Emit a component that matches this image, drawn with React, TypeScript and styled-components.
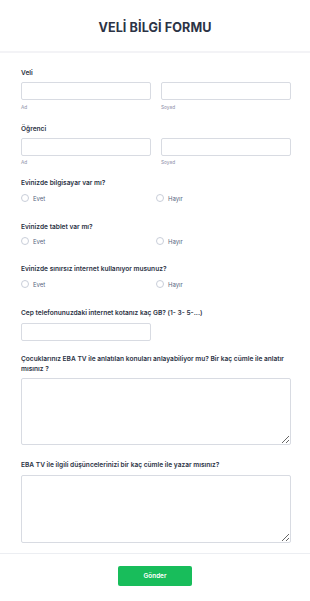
import React from "react";
import styled, { createGlobalStyle } from "styled-components";

const Global = createGlobalStyle`
  html, body { margin: 0; padding: 0; background: #fff; }
  body { font-family: Inter, "Noto Sans", sans-serif; color: #2c3345; }
  * { box-sizing: border-box; }
`;

const Page = styled.div`
  width: 310px;
  background: #fff;
`;

const Header = styled.header`
  height: 53px;
  display: flex;
  align-items: center;
  justify-content: center;
  border-bottom: 2px solid #f3f3f6;
  padding-top: 4px;
`;

const Title = styled.h1`
  margin: 0;
  font-size: 12.6px;
  line-height: 16px;
  font-weight: 700;
  letter-spacing: 0.1px;
  color: #2c3345;
`;

const Form = styled.form`
  display: flex;
  flex-direction: column;
  padding: 0 19px 0 21px;
`;

const Field = styled.div<{ $top: number }>`
  display: flex;
  flex-direction: column;
  padding-top: ${(p) => p.$top}px;
`;

const Label = styled.label<{ $mb?: number }>`
  font-size: 6.6px;
  line-height: 10px;
  font-weight: 600;
  color: #2c3345;
  margin-bottom: ${(p) => p.$mb ?? 4}px;
`;

const Pair = styled.div`
  display: grid;
  grid-template-columns: 1fr 1fr;
  column-gap: 10px;
`;

const Col = styled.div`
  display: flex;
  flex-direction: column;
`;

const Input = styled.input<{ $w?: number }>`
  height: 18px;
  width: ${(p) => (p.$w ? `${p.$w}px` : "100%")};
  border: 1px solid #d8dbe2;
  border-radius: 2px;
  background: #fff;
  outline: none;
  padding: 0 4px;
`;

const Sub = styled.span`
  font-size: 4.8px;
  line-height: 7px;
  color: #8d8fa8;
  margin-top: 3.5px;
`;

const Radios = styled.div`
  display: grid;
  grid-template-columns: 1fr 1fr;
`;

const RadioItem = styled.div`
  display: flex;
  align-items: center;
  gap: 4px;
  height: 8px;
`;

const Circle = styled.span`
  width: 8px;
  height: 8px;
  border-radius: 50%;
  border: 1px solid #c9ced9;
  background: #fff;
`;

const RadioText = styled.span`
  font-size: 6px;
  color: #57647e;
`;

const Area = styled.textarea<{ $h: number }>`
  width: 100%;
  height: ${(p) => p.$h}px;
  border: 1px solid #d8dbe2;
  border-radius: 2px;
  background: #fff;
  outline: none;
  resize: vertical;
  font-family: inherit;
`;

const Footer = styled.div`
  margin-top: 10px;
  border-top: 1px solid #eceef2;
  display: flex;
  justify-content: center;
  padding: 12px 0 17px;
`;

const Button = styled.button`
  width: 74px;
  height: 20px;
  border: none;
  border-radius: 2px;
  background: #18bd5b;
  color: #fff;
  font-family: Inter, sans-serif;
  font-size: 6.4px;
  font-weight: 600;
`;

const YesNo = () => (
  <Radios>
    <RadioItem>
      <Circle />
      <RadioText>Evet</RadioText>
    </RadioItem>
    <RadioItem>
      <Circle />
      <RadioText>Hayır</RadioText>
    </RadioItem>
  </Radios>
);

export default function App() {
  return (
    <Page>
      <Global />
      <Header>
        <Title>VELİ BİLGİ FORMU</Title>
      </Header>
      <Form>
        <Field $top={15}>
          <Label>Veli</Label>
          <Pair>
            <Col>
              <Input />
              <Sub>Ad</Sub>
            </Col>
            <Col>
              <Input />
              <Sub>Soyad</Sub>
            </Col>
          </Pair>
        </Field>
        <Field $top={13}>
          <Label>Öğrenci</Label>
          <Pair>
            <Col>
              <Input />
              <Sub>Ad</Sub>
            </Col>
            <Col>
              <Input />
              <Sub>Soyad</Sub>
            </Col>
          </Pair>
        </Field>
        <Field $top={12}>
          <Label $mb={6}>Evinizde bilgisayar var mı?</Label>
          <YesNo />
        </Field>
        <Field $top={20}>
          <Label $mb={5}>Evinizde tablet var mı?</Label>
          <YesNo />
        </Field>
        <Field $top={19}>
          <Label $mb={6}>Evinizde sınırsız internet kullanıyor musunuz?</Label>
          <YesNo />
        </Field>
        <Field $top={20}>
          <Label $mb={5}>Cep telefonunuzdaki internet kotanız kaç GB? (1- 3- 5-...)</Label>
          <Input $w={130} />
        </Field>
        <Field $top={13}>
          <Label $mb={4}>
            Çocuklarınız EBA TV ile anlatılan konuları anlayabiliyor mu? Bir kaç cümle ile anlatır mısınız ?
          </Label>
          <Area $h={67} />
        </Field>
        <Field $top={15}>
          <Label $mb={5}>EBA TV ile ilgili düşüncelerinizi bir kaç cümle ile yazar mısınız?</Label>
          <Area $h={68} />
        </Field>
      </Form>
      <Footer>
        <Button type="button">Gönder</Button>
      </Footer>
    </Page>
  );
}
